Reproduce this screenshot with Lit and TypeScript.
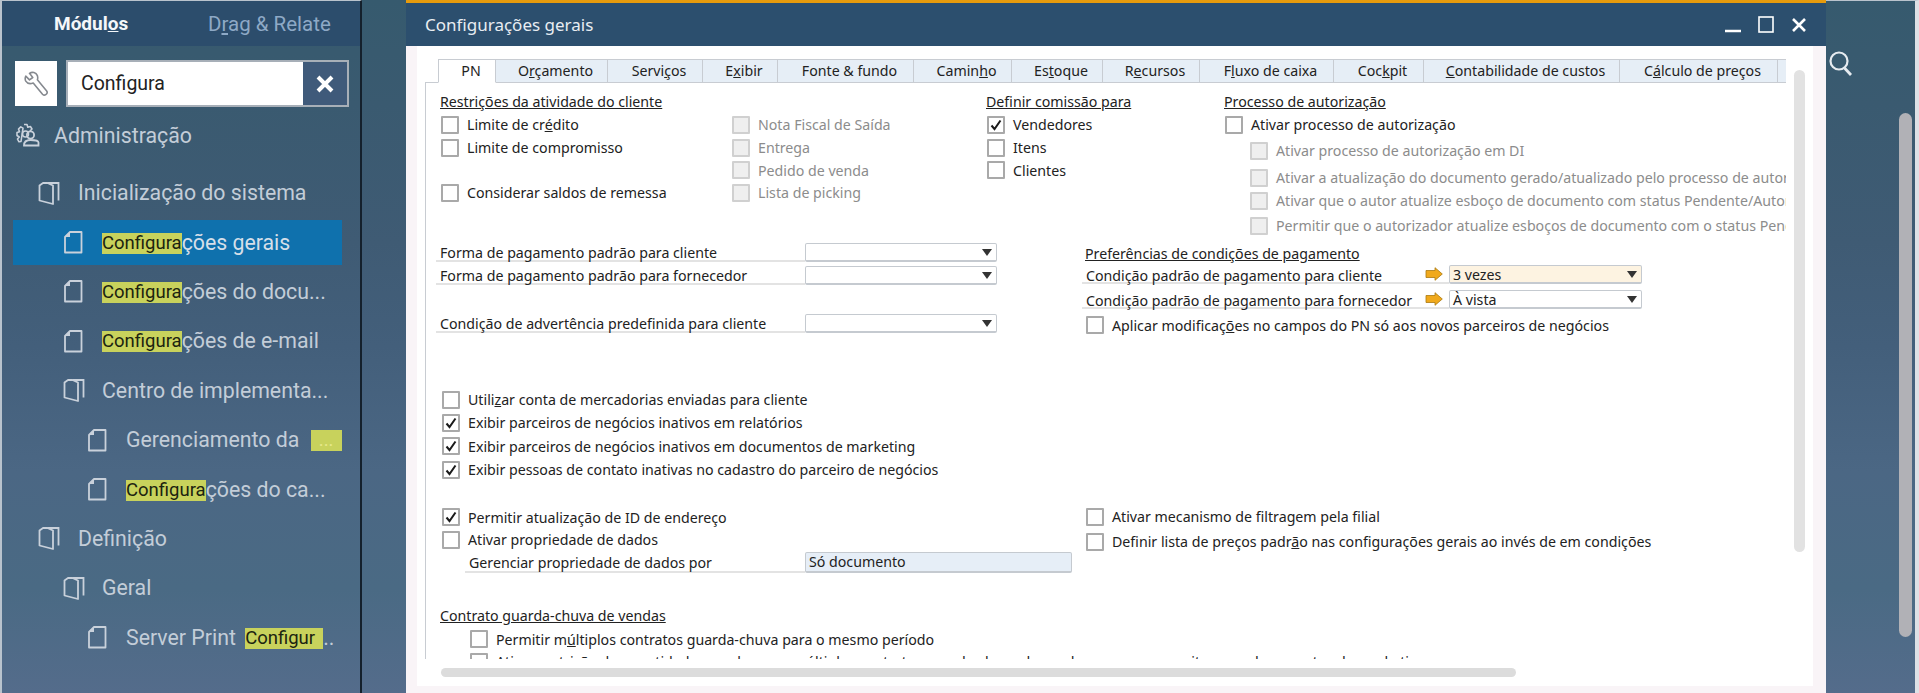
import { LitElement, css, html } from "lit";
import { customElement } from "lit/decorators.js";

// "_" marks the mnemonic letter, drawn underlined like the original app
const mn = (text: string) => {
  const i = text.indexOf("_");
  if (i < 0) return text;
  return html`${text.slice(0, i)}<u>${text[i + 1]}</u>${text.slice(i + 2)}`;
};

const tabs: [string, number][] = [
  ["PN", 58],
  ["O_rçamento", 112],
  ["Servi_ços", 95],
  ["E_xibir", 75],
  ["Fonte & fundo", 136],
  ["Camin_ho", 98],
  ["Es_toque", 91],
  ["R_ecursos", 97],
  ["F_luxo de caixa", 134],
  ["Coc_kpit", 90],
  ["_Contabilidade de custos", 196],
  ["C_álculo de preços", 158],
  ["", 20],
];

const pageIcon = html`<svg class="ico" width="22" height="24" viewBox="0 0 22 24">
  <path d="M7 2H18.5V22.5H2V7Z" fill="none" stroke="currentColor" stroke-width="1.8" stroke-linejoin="round" />
  <path d="M7 2V7H2Z" fill="currentColor" />
</svg>`;

const folderIcon = html`<svg class="ico" width="22" height="24" viewBox="0 0 22 24">
  <path d="M1.5 4.5L5 2H9.5L15 4.5V23L1.5 19.5Z" fill="none" stroke="currentColor" stroke-width="1.8" stroke-linejoin="round" />
  <path d="M9.5 2H20.5V19.5" fill="none" stroke="currentColor" stroke-width="1.8" />
</svg>`;

const arrow = html`<svg class="link" width="18" height="14" viewBox="0 0 18 14">
  <path d="M1 3.5H10V0.7L17.3 7L10 13.3V10.5H1Z" fill="#f0a91c" stroke="#a9780f" stroke-width="0.8" />
</svg>`;

@customElement("app-root")
class AppRoot extends LitElement {
  static styles = css`
    :host {
      display: flex;
      width: 1919px;
      height: 693px;
      overflow: hidden;
      background: linear-gradient(180deg, #365a6e 0%, #3a5a70 15%, #3f5b74 35%, #435f7b 50%, #4b6784 68%, #4a6a84 85%, #546c8b 100%);
      font-family: "Noto Sans", "Liberation Sans", sans-serif;
    }
    .side {
      width: 358px;
      flex: none;
      border-top: 1px solid #b9c3cd;
      border-left: 2px solid #b9c3cd;
      border-right: 2px solid #14202c;
      font-family: Roboto, sans-serif;
    }
    .side-head {
      height: 45px;
      background: #2c4d6c;
      display: flex;
      align-items: center;
      font-size: 20.5px;
      color: #8ea9c6;
    }
    .side-head b {
      margin-left: 52px;
      width: 154px;
      font-size: 19px;
      font-weight: 700;
      color: #f4f7fa;
    }
    .search {
      display: flex;
      margin: 14px 0 0 13px;
      height: 47px;
    }
    .tool {
      width: 42px;
      height: 45px;
      margin-top: 1px;
      background: #fff;
      display: flex;
      align-items: center;
      justify-content: center;
    }
    .field {
      margin-left: 9px;
      width: 279px;
      border: 2px solid #a7afb8;
      display: flex;
      background: #fff;
      font-size: 19.5px;
      color: #222;
      align-items: center;
    }
    .field span {
      flex: 1;
      padding-left: 13px;
    }
    .clear {
      width: 44px;
      height: 100%;
      background: #3f5a7a;
      display: flex;
      align-items: center;
      justify-content: center;
    }
    .tree {
      display: flex;
      flex-direction: column;
      font-size: 21.3px;
      color: #c3cdd8;
    }
    .admin {
      display: flex;
      align-items: center;
      height: 44px;
      margin-top: 6px;
      padding-left: 13px;
      gap: 14px;
      margin-bottom: 11px;
    }
    .row {
      height: 49.4px;
      display: flex;
      align-items: center;
      white-space: nowrap;
      box-sizing: border-box;
      width: 329px;
      margin-left: 11px;
    }
    .row .ico {
      flex: none;
      color: #c9d1db;
    }
    .lv1 {
      padding-left: 25px;
      gap: 18px;
    }
    .lv2 {
      padding-left: 50px;
      gap: 17px;
    }
    .lv3 {
      padding-left: 74px;
      gap: 17px;
    }
    .row.sel {
      height: 45px;
      margin: 2.2px 0 2.2px 11px;
      background: #0f71ad;
      color: #d5dfe9;
    }
    mark {
      background: #c8d25c;
      color: #1c2410;
      display: inline-block;
      font-size: 18.5px;
      line-height: 21px;
      vertical-align: 1px;
    }
    mark.fill {
      color: #e6e98a;
      width: 31px;
      margin-left: 6px;
      text-align: center;
    }
    mark.cut {
      width: 78px;
      margin-left: 4px;
    }
    .gutter {
      width: 44px;
      flex: none;
    }
    .win {
      width: 1420px;
      flex: none;
      display: flex;
      flex-direction: column;
      position: relative;
    }
    .title {
      height: 43px;
      border-top: 3px solid #e79b0c;
      background: #2c4f6e;
      color: #e8edf2;
      display: flex;
      align-items: center;
      padding: 0 19px 0 19px;
      font-size: 17px;
    }
    .title span {
      flex: 1;
    }
    .btns {
      display: flex;
      align-items: center;
      gap: 17px;
    }
    .body {
      flex: 1;
      background: #f9f4f7;
      padding: 0 13px 7px 11px;
      display: flex;
    }
    .sheet {
      flex: 1;
      background: #fff;
      display: flex;
      flex-direction: column;
    }
    .clip {
      width: 1369px;
      height: 613px;
      overflow: hidden;
      font-size: 14.2px;
      color: #222;
      white-space: nowrap;
    }
    .tabs {
      display: flex;
      margin: 13px 0 0 21px;
      height: 24px;
      position: relative;
    }
    .tab {
      box-sizing: border-box;
      flex: none;
      background: #e6eef6;
      border: 1px solid #c8ccd2;
      border-left: none;
      padding-left: 8px;
      text-align: center;
      line-height: 22px;
      color: #222;
    }
    .tab.on {
      background: #fff;
      border-left: 1px solid #c8ccd2;
      border-bottom-color: #fff;
    }
    .panel {
      margin-left: 8px;
      margin-top: -1px;
      border-left: 1px solid #c8ccd2;
      border-top: 1px solid #c8ccd2;
      padding-top: 8px;
      height: 600px;
    }
    .band {
      display: flex;
      box-sizing: border-box;
    }
    .b1 {
      height: 152px;
      padding-left: 14px;
    }
    .b2 {
      height: 145px;
      padding-left: 10px;
    }
    .b3 {
      height: 118px;
      padding-left: 15px;
      flex-direction: column;
    }
    .b4 {
      height: 101px;
      padding-left: 15px;
    }
    .b5 {
      padding-left: 14px;
      flex-direction: column;
    }
    .col {
      display: flex;
      flex-direction: column;
      flex: none;
    }
    .w291 {
      width: 291px;
    }
    .w255 {
      width: 255px;
    }
    .w238 {
      width: 238px;
    }
    .w644 {
      width: 644px;
    }
    .head {
      height: 22.67px;
      line-height: 22px;
      text-decoration: underline;
    }
    .head.pref {
      height: 22px;
      margin-left: 3px;
    }
    .head.contract {
      height: 20px;
      line-height: 20px;
      margin: -1px 0 2px;
    }
    .chk {
      height: 22.67px;
      display: flex;
      align-items: center;
      gap: 8px;
      margin-left: 1px;
      flex: none;
    }
    .gap3 {
      height: 23.33px;
    }
    .tall {
      height: 25px;
    }
    .short {
      height: 20px;
      margin-left: 4px;
    }
    .box {
      box-sizing: border-box;
      width: 18px;
      height: 18px;
      border: 2px solid #a9a9a9;
      border-radius: 1px;
      background: #fff;
      flex: none;
      display: flex;
      align-items: center;
      justify-content: center;
    }
    .off .box {
      background: #efefef;
      border-color: #d0d0d0;
    }
    .off {
      color: #8c8c8c;
    }
    .ml3 {
      margin-top: 3.3px;
    }
    .ml4 {
      margin-top: 4.3px;
    }
    .ml2 {
      margin-top: 2.3px;
    }
    .sub {
      margin-left: 26px;
    }
    .line {
      display: flex;
      height: 19px;
      margin-bottom: 4px;
    }
    .line.late {
      margin-top: 25px;
    }
    .line.mb6 {
      margin-bottom: 6px;
    }
    .line.big {
      height: 21px;
      margin: 1px 0 0 24px;
    }
    .line label {
      box-sizing: border-box;
      border-bottom: 2px solid #e3e3e3;
      padding: 1px 0 0 4px;
      line-height: 19px;
      display: flex;
      align-items: center;
      justify-content: space-between;
    }
    .line.mb6 label {
      padding-top: 3px;
    }
    .w369 {
      width: 369px;
    }
    .w367 {
      width: 367px;
    }
    .w340 {
      width: 340px;
    }
    .drop {
      box-sizing: border-box;
      border: 1px solid #c5cad0;
      border-bottom-width: 2px;
      border-radius: 2px;
      background: #fff;
      display: flex;
      align-items: center;
      justify-content: space-between;
      padding: 0 4px 0 3px;
      line-height: 16px;
    }
    .line.mb6 .drop span {
      margin-top: 2px;
    }
    .drop i {
      width: 0;
      height: 0;
      border-left: 5.5px solid transparent;
      border-right: 5.5px solid transparent;
      border-top: 7px solid #333;
    }
    .w192 {
      width: 192px;
    }
    .w193 {
      width: 193px;
    }
    .warm {
      background: #fdf3e1;
    }
    .link {
      margin: -3px 6px 0 0;
    }
    .right {
      margin-left: 85px;
    }
    .shift {
      margin-top: -2px;
    }
    .info {
      width: 267px;
      height: 21px;
      background: #e6eef7;
    }
    .indent {
      margin-left: 30px;
    }
    .hscroll {
      margin: 9px 0 0 24px;
      width: 1075px;
      height: 9px;
      border-radius: 5px;
      background: #dcdcdc;
    }
    .vscroll {
      position: absolute;
      left: 1388px;
      top: 70px;
      width: 11px;
      height: 482px;
      border-radius: 6px;
      background: #e2e2e2;
    }
    .outer {
      flex: 1;
      position: relative;
      border-top: 1px solid #b9c3cd;
      border-right: 4px solid #dde1e6;
    }
    .lens {
      position: absolute;
      left: 2px;
      top: 49px;
    }
    .page-bar {
      position: absolute;
      left: 73px;
      top: 112px;
      width: 13px;
      height: 524px;
      border-radius: 7px;
      background: #b1b1b6;
    }
  `;

  check(label: unknown, state = "", extra = "") {
    return html`<div class="chk ${state === "off" ? "off" : ""} ${extra}">
      <span class="box">
        ${state === "on"
          ? html`<svg width="12" height="12" viewBox="0 0 12 12">
              <path d="M1.5 6.5L4.5 10L10.5 1.5" fill="none" stroke="#1a1a1a" stroke-width="2" />
            </svg>`
          : ""}
      </span>
      <span>${label}</span>
    </div>`;
  }

  treeRow(level: string, icon: unknown, label: unknown, extra = "") {
    return html`<div class="row ${level} ${extra}">${icon}<span>${label}</span></div>`;
  }

  render() {
    return html`
      <aside class="side">
        <div class="side-head"><b>Módul<u>o</u>s</b><span>D<u>r</u>ag &amp; Relate</span></div>
        <div class="search">
          <div class="tool">
            <svg width="26" height="28" viewBox="0 0 28 30">
              <path
                d="M3 6.5L7 10.5L10.5 8L7 3.5C10 1.5 14 2.5 15.5 6C16 7.5 16 9 15.5 10.5L25.5 22.5C26.5 24 26 25.5 24.5 26.5C23 27.5 22 27 21 26L11 14C8 15 4.5 14.5 3 12C2 10 2.3 8 3 6.5Z"
                fill="none"
                stroke="#85898f"
                stroke-width="1.7"
                stroke-linejoin="round"
              />
            </svg>
          </div>
          <div class="field">
            <span>Configura</span>
            <div class="clear">
              <svg width="18" height="18" viewBox="0 0 18 18">
                <path d="M2 2L16 16M16 2L2 16" stroke="#fff" stroke-width="4" />
              </svg>
            </div>
          </div>
        </div>
        <div class="tree">
          <div class="admin">
            <svg class="ico" width="25" height="24" viewBox="0 0 25 24">
              <path
                d="M9 1.5H12L12.8 4.2L15.4 3.5L17 6L15 8M6 18.5L4 18.8L2.5 16L4.3 14L2 12.5V9.5L4.5 8.8L3.5 6L5.8 3.8L8 5.2Z"
                fill="none"
                stroke="#c9d1db"
                stroke-width="1.6"
                stroke-linejoin="round"
              />
              <circle cx="10.5" cy="11" r="3" fill="none" stroke="#c9d1db" stroke-width="1.6" />
              <circle cx="15.5" cy="12" r="3.6" fill="none" stroke="#c9d1db" stroke-width="1.8" />
              <path d="M9 22.5C9 18 12 17 15.5 17C19 17 23.5 17.5 23.5 19.5V22.5Z" fill="none" stroke="#c9d1db" stroke-width="1.8" />
            </svg>
            <span>Administração</span>
          </div>
          ${this.treeRow("lv1", folderIcon, "Inicialização do sistema")}
          ${this.treeRow("lv2", pageIcon, html`<mark>Configura</mark>ções gerais`, "sel")}
          ${this.treeRow("lv2", pageIcon, html`<mark>Configura</mark>ções do docu...`)}
          ${this.treeRow("lv2", pageIcon, html`<mark>Configura</mark>ções de e-mail`)}
          ${this.treeRow("lv2", folderIcon, "Centro de implementa...")}
          ${this.treeRow("lv3", pageIcon, html`Gerenciamento da <mark class="fill">...</mark>`)}
          ${this.treeRow("lv3", pageIcon, html`<mark>Configura</mark>ções do ca...`)}
          ${this.treeRow("lv1", folderIcon, "Definição")}
          ${this.treeRow("lv2", folderIcon, "Geral")}
          ${this.treeRow("lv3", pageIcon, html`Server Print <mark class="cut">Configur</mark>..`)}
        </div>
      </aside>
      <div class="gutter"></div>
      <section class="win">
        <div class="title">
          <span>Configurações gerais</span>
          <div class="btns">
            <svg width="16" height="16" viewBox="0 0 16 16"><path d="M0 14H16" stroke="#fff" stroke-width="2.5" /></svg>
            <svg width="16" height="17" viewBox="0 0 16 17"><rect x="1" y="1" width="14" height="15" fill="none" stroke="#fff" stroke-width="1.6" /></svg>
            <svg width="16" height="16" viewBox="0 0 16 16"><path d="M2 2L14 14M14 2L2 14" stroke="#fff" stroke-width="2.6" /></svg>
          </div>
        </div>
        <div class="body">
          <div class="sheet">
            <div class="clip">
              <div class="tabs">
                ${tabs.map(
                  ([t, w], i) => html`<div class="tab ${i === 0 ? "on" : ""}" style="width:${w}px">${mn(t)}</div>`
                )}
              </div>
              <div class="panel">
                <div class="band b1">
                  <div class="col w291">
                    <div class="head">Restrições da atividade do cliente</div>
                    ${this.check(mn("Limite de cr_édito"))}
                    ${this.check("Limite de compromisso")}
                    <div class="chk"></div>
                    ${this.check("Considerar saldos de remessa")}
                  </div>
                  <div class="col w255">
                    <div class="head"></div>
                    ${this.check("Nota Fiscal de Saída", "off")}
                    ${this.check("Entrega", "off")}
                    ${this.check("Pedido de venda", "off")}
                    ${this.check("Lista de picking", "off")}
                  </div>
                  <div class="col w238">
                    <div class="head">Definir comissão para</div>
                    ${this.check("Vendedores", "on")}
                    ${this.check("Itens")}
                    ${this.check("Clientes")}
                  </div>
                  <div class="col">
                    <div class="head">Processo de autorização</div>
                    ${this.check("Ativar processo de autorização")}
                    ${this.check("Ativar processo de autorização em DI", "off", "sub ml3")}
                    ${this.check("Ativar a atualização do documento gerado/atualizado pelo processo de autorização", "off", "sub ml4")}
                    ${this.check("Ativar que o autor atualize esboço de documento com status Pendente/Autorizado", "off", "sub")}
                    ${this.check("Permitir que o autorizador atualize esboços de documento com o status Pendente", "off", "sub ml2")}
                  </div>
                </div>
                <div class="band b2">
                  <div class="col">
                    <div class="line">
                      <label class="w369">Forma de pagamento padrão para cliente</label>
                      <div class="drop w192"><span></span><i></i></div>
                    </div>
                    <div class="line">
                      <label class="w369">Forma de pagamento padrão para fornecedor</label>
                      <div class="drop w192"><span></span><i></i></div>
                    </div>
                    <div class="line late">
                      <label class="w369">Condição de advertência predefinida para cliente</label>
                      <div class="drop w192"><span></span><i></i></div>
                    </div>
                  </div>
                  <div class="col right">
                    <div class="head pref">Preferências de condições de pagamento</div>
                    <div class="line mb6">
                      <label class="w367">Condição padrão de pagamento para cliente ${arrow}</label>
                      <div class="drop w193 warm"><span>3 vezes</span><i></i></div>
                    </div>
                    <div class="line mb6">
                      <label class="w367">Condição padrão de pagamento para fornecedor ${arrow}</label>
                      <div class="drop w193"><span>À vista</span><i></i></div>
                    </div>
                    ${this.check(mn("Aplicar modificaç_ões no campos do PN só aos novos parceiros de negócios"), "", "short")}
                  </div>
                </div>
                <div class="band b3">
                  ${this.check(mn("Utili_zar conta de mercadorias enviadas para cliente"), "", "gap3")}
                  ${this.check("Exibir parceiros de negócios inativos em relatórios", "on", "gap3")}
                  ${this.check("Exibir parceiros de negócios inativos em documentos de marketing", "on", "gap3")}
                  ${this.check("Exibir pessoas de contato inativas no cadastro do parceiro de negócios", "on", "gap3")}
                </div>
                <div class="band b4">
                  <div class="col w644">
                    ${this.check("Permitir atualização de ID de endereço", "on")}
                    ${this.check("Ativar propriedade de dados")}
                    <div class="line big">
                      <label class="w340">Gerenciar propriedade de dados por</label>
                      <div class="drop info"><span>Só documento</span></div>
                    </div>
                  </div>
                  <div class="col shift">
                    ${this.check("Ativar mecanismo de filtragem pela filial", "", "tall")}
                    ${this.check(mn("Definir lista de preços padr_ão nas configurações gerais ao invés de em condições"), "", "tall")}
                  </div>
                </div>
                <div class="band b5">
                  <div class="head contract">Contrato guarda-chuva de vendas</div>
                  ${this.check(mn("Permitir m_últiplos contratos guarda-chuva para o mesmo período"), "", "indent")}
                  ${this.check("Ativar restrição de quantidade ou valor para múltiplos contratos guarda-chuva de vendas com o mesmo item em documentos de marketing", "", "indent")}
                </div>
              </div>
            </div>
            <div class="hscroll"></div>
          </div>
        </div>
        <div class="vscroll"></div>
      </section>
      <div class="outer">
        <svg class="lens" width="26" height="28" viewBox="0 0 26 28">
          <circle cx="11" cy="11" r="8.5" fill="none" stroke="#e6ebf0" stroke-width="2.2" />
          <path d="M16.5 18L23 25" stroke="#e6ebf0" stroke-width="2.8" />
        </svg>
        <div class="page-bar"></div>
      </div>
    `;
  }
}

declare global {
  interface HTMLElementTagNameMap {
    "app-root": AppRoot;
  }
}
